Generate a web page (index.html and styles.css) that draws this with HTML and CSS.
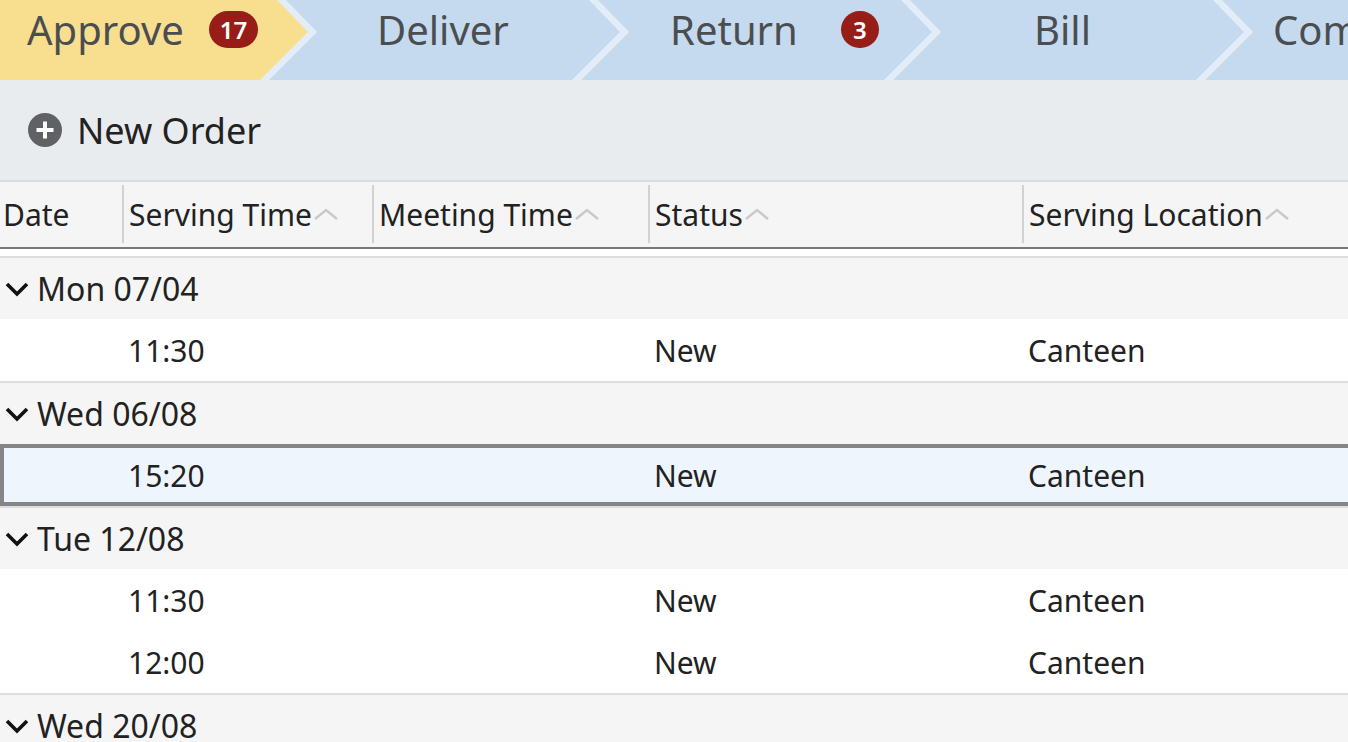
FILE: index.html
```html
<!DOCTYPE html>
<html lang="en">
<head>
    <meta charset="UTF-8">
    <meta name="viewport" content="width=device-width, initial-scale=1.0">
    <title>Orders</title>
    <link rel="stylesheet" href="styles.css">
</head>
<body>
    <nav class="steps">
        <div class="step step-approve current"><span class="step-label">Approve</span><span class="badge">17</span></div>
        <div class="step step-deliver"><span class="step-label">Deliver</span></div>
        <div class="step step-return"><span class="step-label">Return</span><span class="badge">3</span></div>
        <div class="step step-bill"><span class="step-label">Bill</span></div>
        <div class="step step-complete"><span class="step-label">Complete</span></div>
    </nav>

    <div class="toolbar">
        <button class="new-order">
            <svg class="plus" viewBox="0 0 34 34" width="34" height="34">
                <circle cx="17" cy="17" r="17" fill="#5f6164"/>
                <path d="M17 8.5v17M8.5 17h17" stroke="#fff" stroke-width="4"/>
            </svg>
            New Order
        </button>
    </div>

    <div class="grid">
        <div class="grid-head">
            <div class="col col-first">Date</div>
            <div class="col">Serving Time<svg class="sort" viewBox="0 0 26 14" width="26" height="14"><path d="M2 12L13 3l11 9"/></svg></div>
            <div class="col">Meeting Time<svg class="sort" viewBox="0 0 26 14" width="26" height="14"><path d="M2 12L13 3l11 9"/></svg></div>
            <div class="col">Status<svg class="sort" viewBox="0 0 26 14" width="26" height="14"><path d="M2 12L13 3l11 9"/></svg></div>
            <div class="col">Serving Location<svg class="sort" viewBox="0 0 26 14" width="26" height="14"><path d="M2 12L13 3l11 9"/></svg></div>
        </div>

        <div class="grid-body">
            <div class="group-row">
                <svg class="caret" viewBox="0 0 26 16" width="26" height="16"><path d="M3 3l10 10L23 3"/></svg>
                <span>Mon 07/04</span>
            </div>
            <div class="row">
                <div class="cell"></div><div class="cell">11:30</div><div class="cell"></div><div class="cell">New</div><div class="cell">Canteen</div>
            </div>

            <div class="group-row">
                <svg class="caret" viewBox="0 0 26 16" width="26" height="16"><path d="M3 3l10 10L23 3"/></svg>
                <span>Wed 06/08</span>
            </div>
            <div class="row selected">
                <div class="cell"></div><div class="cell">15:20</div><div class="cell"></div><div class="cell">New</div><div class="cell">Canteen</div>
            </div>

            <div class="group-row">
                <svg class="caret" viewBox="0 0 26 16" width="26" height="16"><path d="M3 3l10 10L23 3"/></svg>
                <span>Tue 12/08</span>
            </div>
            <div class="row">
                <div class="cell"></div><div class="cell">11:30</div><div class="cell"></div><div class="cell">New</div><div class="cell">Canteen</div>
            </div>
            <div class="row">
                <div class="cell"></div><div class="cell">12:00</div><div class="cell"></div><div class="cell">New</div><div class="cell">Canteen</div>
            </div>

            <div class="group-row">
                <svg class="caret" viewBox="0 0 26 16" width="26" height="16"><path d="M3 3l10 10L23 3"/></svg>
                <span>Wed 20/08</span>
            </div>
        </div>
    </div>
</body>
</html>
```

FILE: styles.css
```css
html, body {
    margin: 0;
    overflow: hidden;
}
body {
    font-family: "Noto Sans", "Open Sans", sans-serif;
    color: #222;
    background: #fff;
}

/* step bar */
.steps {
    display: flex;
    height: 80px;
    overflow: hidden;
    background: #e3edf7;
}
.step {
    flex: none;
    display: flex;
    align-items: center;
    box-sizing: border-box;
    width: 351px;
    height: 80px;
    margin-left: -39px;
    padding-bottom: 21px;
    background: #c5daee;
    color: #4b4e51;
    font-size: 40px;
    clip-path: polygon(17px 0, 320px 0, 351px 32px, 303px 80px, 0 80px, 48px 32px);
}
.step.current {
    background: #f8de8f;
}
.step-approve {
    width: 308px;
    margin-left: 0;
    padding-left: 27px;
    clip-path: polygon(0 0, 277px 0, 308px 32px, 260px 80px, 0 80px);
}
.step-deliver { padding-left: 108px; }
.step-return { padding-left: 89px; }
.step-bill { padding-left: 141px; }
.step-complete { padding-left: 68px; }

.badge {
    display: inline-flex;
    align-items: center;
    justify-content: center;
    box-sizing: border-box;
    min-width: 38px;
    height: 37px;
    padding: 0 11px;
    margin-left: 25px;
    border-radius: 19px;
    background: #971d18;
    color: #fff;
    font-size: 24px;
    font-weight: 600;
}
.step-return .badge {
    margin-left: 43px;
    padding: 0;
}

/* toolbar */
.toolbar {
    height: 100px;
    display: flex;
    align-items: center;
    background: #e9ecef;
    border-bottom: 2px solid #d9dcdf;
    padding-left: 28px;
}
.new-order {
    display: flex;
    align-items: center;
    gap: 15px;
    padding: 0;
    border: none;
    background: none;
    color: #222;
    font-family: inherit;
    font-size: 36px;
    cursor: pointer;
}
.plus { display: block; }

/* grid */
.grid {
    width: 1422px;
}
.grid-head,
.row {
    display: grid;
    grid-template-columns: 122px 250px 276px 374px 400px;
}
.grid-head {
    box-sizing: border-box;
    height: 67px;
    padding: 3px 0 4px;
    background: #f5f5f5;
    border-bottom: 2px solid #777;
}
.col {
    display: flex;
    align-items: center;
    padding-left: 5px;
    border-left: 2px solid #d2d2d2;
    font-size: 30px;
}
.col-first {
    border-left: none;
    padding-left: 3px;
}
.sort {
    margin-left: 1px;
    fill: none;
    stroke: #c9c9c9;
    stroke-width: 2.5;
}

.grid-body {
    padding-top: 7px;
}
.group-row {
    display: flex;
    align-items: center;
    height: 61px;
    padding-left: 4px;
    border-top: 2px solid #dcdddf;
    background: #f5f5f5;
    font-size: 32px;
}
.caret {
    margin-right: 7px;
    fill: none;
    stroke: #111;
    stroke-width: 3.6;
}
.row {
    height: 62px;
    background: #fff;
}
.row.selected {
    background: #eff5fd;
    outline: 4px solid #858585;
    outline-offset: -4px;
}
.cell {
    display: flex;
    align-items: center;
    padding-left: 6px;
    font-size: 30px;
}
```
